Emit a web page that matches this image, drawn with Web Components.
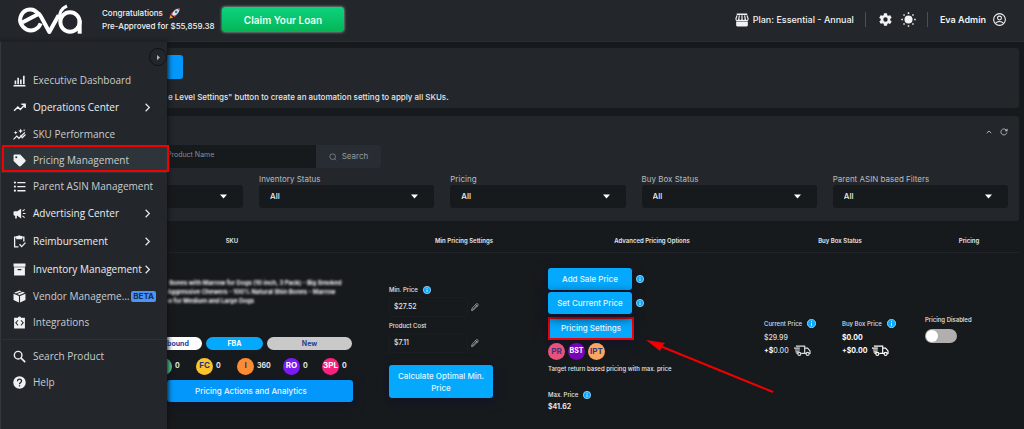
<!DOCTYPE html>
<html lang="en">
<head>
<meta charset="utf-8">
<title>Eva - Pricing Management</title>
<style>
html { background: #171a1d; }
body { margin: 0; min-height: 100vh; display: flex; font-family: Inter, "Open Sans", sans-serif; font-size: 10px; color: #e4e6e8; background: #171a1d; }
</style>
</head>
<body>
<eva-app></eva-app>
<script>
const define = (name, html, setup) => customElements.define(name, class extends HTMLElement {
  constructor() {
    super();
    const t = document.createElement('template');
    t.innerHTML = '<style>*{box-sizing:border-box}button,input,select{font:inherit;color:inherit;margin:0}</style>' + html;
    this.attachShadow({ mode: 'open' }).appendChild(t.content.cloneNode(true));
  }
  connectedCallback() { if (setup) setup(this, this.shadowRoot); }
});

const S = 'fill="none" stroke="currentColor" stroke-width="2" stroke-linecap="round" stroke-linejoin="round"';
const ICONS = {
  chart: '<path fill="currentColor" d="M1 20.500h22V23H1zM3 12h3v7H3zM8 7h3v12H8zM13 10h3v9h-3zM18.500 3h3v16h-3z"/>',
  trend: '<path fill="none" stroke="currentColor" stroke-width="2.600" d="M2 18l7-7 4.500 4.500L22 7M15.500 6H22.500v7"/>',
  spark: '<path fill="none" stroke="currentColor" stroke-width="2.200" d="M1 21l6-6 4 4L22 8M14 13l3 5 6-6"/><path fill="currentColor" d="M14 1l1.300 3.200L18.500 5.500l-3.200 1.300L14 10l-1.300-3.200L9.500 5.500l3.200-1.300zM5 5l1 2.500L8.500 8.500 6 9.500 5 12 4 9.500 1.500 8.500 4 7.500zM20.500 2l.6 1.400 1.400.6-1.400.6-.6 1.400-.6-1.400-1.400-.6 1.400-.6z"/>',
  tag: '<path fill="currentColor" fill-rule="evenodd" d="M1 3.500C1 2 2 1 3.500 1h8.700c.8 0 1.500.3 2.100.9l8.300 8.500c1.100 1.100 1.100 2.800 0 3.900l-7.900 7.900c-1.100 1.100-2.800 1.100-3.900 0L1.900 14C1.300 13.500 1 12.800 1 12zM6 4.200a1.900 1.900 0 1 0 0 3.800 1.900 1.900 0 0 0 0-3.800z"/>',
  list: '<path fill="currentColor" d="M8 3.500h15V6H8zM8 11h15v2.500H8zM8 18.500h15V21H8z"/><circle cx="3.500" cy="4.800" r="2" fill="currentColor"/><circle cx="3.500" cy="12.200" r="2" fill="currentColor"/><circle cx="3.500" cy="19.700" r="2" fill="currentColor"/>',
  horn: '<path fill="currentColor" d="M1 9.500C1 8.500 2 8 3 8h5l7-5v18l-7-5H7v5H4v-5H3c-1 0-2-.5-2-1.500z"/><path fill="none" stroke="currentColor" stroke-width="2" d="M18.500 12H23M17.500 7.500l4-3M17.500 16.500l4 3"/>',
  clip: '<path fill="none" stroke="currentColor" stroke-width="2.400" d="M10 22H3V4h17v8"/><path fill="currentColor" d="M6 2h3a3 3 0 0 1 5 0h3v6H6z"/><path fill="none" stroke="currentColor" stroke-width="2.400" d="M12 17l4 4.500L23 14"/>',
  box: '<path fill="currentColor" fill-rule="evenodd" d="M1 1h22v6H1zM2 8h20v15H2zM8.500 11v2.500h7V11z"/>',
  cube: '<path fill="currentColor" d="M12 1l4 1.500-10.500 4L2 5zM18 3.200L22 5 12 9 7.700 7.300zM1 7l10 4v12L1 18.500zM23 7l-10 4v12l10-4.500z"/>',
  code: '<path fill="currentColor" fill-rule="evenodd" d="M2 3h7a3.200 3.200 0 0 1 6 0h7v20H2zM10 8.500L8.700 7.200 3.900 12.500l4.800 5.300L10 16.500l-3.500-4zM14 8.500l3.500 4-3.500 4 1.300 1.300 4.800-5.300-4.800-5.300z"/>',
  search: '<circle cx="9.500" cy="9.500" r="7" fill="none" stroke="currentColor" stroke-width="2.600"/><path fill="none" stroke="currentColor" stroke-width="3" d="M14.500 14.500L22.500 22.500"/>',
  lens: '<circle cx="11" cy="11" r="8.500" fill="none" stroke="currentColor" stroke-width="2"/><path fill="none" stroke="currentColor" stroke-width="2" d="M16.500 16.500L21 22"/>',
  help: '<circle cx="12" cy="12" r="11.500" fill="currentColor"/><path fill="none" stroke="#23272b" stroke-width="2.400" d="M8.300 9.500c0-5.200 7.500-4.600 7.500-.3 0 2.600-3.800 3-3.800 6M12 17v2.600"/>',
  chevron: '<path fill="none" stroke="currentColor" stroke-width="3" d="M7 2l10 10L7 22"/>',
  play: '<path fill="currentColor" d="M7 3l10 9-10 9z"/>',
  store: '<path fill="currentColor" d="M3 1h18v2.500H3zM2 14.500h20V21c0 1-.8 2-2 2H4c-1.200 0-2-1-2-2z"/><path fill="none" stroke="currentColor" stroke-width="2" d="M3.500 4L1.500 10c0 4 5 4 5 0l1-6M6.500 10c0 4 5.500 4 5.500 0V4M12 10c0 4 5.500 4 5.500 0l-1-6M17.500 10c0 4 5 4 5 0l-2-6"/>',
  gear: '<path fill="currentColor" d="M19.400 13c0-.3.100-.6.100-1s0-.7-.1-1l2.100-1.600c.2-.2.200-.4.100-.6l-2-3.500c-.1-.2-.4-.3-.6-.2l-2.500 1c-.5-.4-1.100-.7-1.700-1l-.4-2.600c0-.2-.2-.4-.5-.4h-4c-.2 0-.4.200-.5.400l-.4 2.600c-.6.300-1.200.6-1.700 1l-2.500-1c-.2-.1-.5 0-.6.200l-2 3.500c-.1.200-.1.500.1.600L4.500 11c0 .3-.1.700-.1 1s0 .7.1 1l-2.100 1.600c-.2.200-.2.400-.1.600l2 3.500c.1.200.4.300.6.200l2.500-1c.5.400 1.100.7 1.700 1l.4 2.600c0 .3.200.5.500.5h4c.2 0 .4-.2.500-.4l.4-2.600c.6-.3 1.200-.6 1.700-1l2.500 1c.2.100.5 0 .6-.2l2-3.500c.1-.2.100-.5-.1-.6zM12 15.500a3.500 3.500 0 1 1 0-7 3.500 3.500 0 0 1 0 7z"/>',
  sun: '<circle cx="12" cy="12" r="6.400" fill="currentColor"/><path stroke="currentColor" stroke-width="2.400" d="M12 .5v2.500M12 21v2.500M.5 12h2.500M21 12h2.500M4 4l1.700 1.700M18.300 18.300l1.700 1.700M4 20l1.700-1.700M18.300 5.700L20 4"/>',
  user: '<circle cx="12" cy="12" r="10.800" fill="none" stroke="currentColor" stroke-width="2"/><circle cx="12" cy="9.300" r="3.600" fill="none" stroke="currentColor" stroke-width="2"/><path fill="none" stroke="currentColor" stroke-width="2" d="M4.500 19c3.500-4.500 11.500-4.500 15 0"/>',
  up: '<path fill="none" stroke="currentColor" stroke-width="3.500" d="M3 16.500L12 8l9 8.500"/>',
  refresh: '<path fill="none" stroke="currentColor" stroke-width="2.400" d="M20.500 13.500A9 9 0 1 1 18 5.500l2 2"/><path fill="currentColor" d="M22.500 1.500v8.500H14z"/>',
  caret: '<path fill="currentColor" d="M0 5h24L12 19z"/>',
  pencil: `<path ${S} d="M2 22l1.500-7L16.500 2.300c2.500-1.800 6 1.500 4.500 4.500L8.500 20zM14 5l5 5M6 19L17 8"/>`,
  info: '<circle cx="12" cy="12" r="11" fill="#0aa9fb" stroke="#bfe6fb" stroke-width="2"/><path stroke="#eaf8ff" stroke-width="2.600" d="M12 10.500V18M12 5.500v2.800"/>',
  rocket: '<path fill="#f9a11b" d="M1 23l2-8 6 6z"/><path fill="#e3342f" d="M3 13l5-5 3 3-5 6zM11 20l5-3v-5l-6 4z"/><path fill="#dfe6ee" d="M7 15C8 7 14 1 23 1c0 9-6 15-14 16z"/><path fill="#e3342f" d="M18 1.500C20 1 23 1 23 1s0 3-.5 5z"/><circle cx="15.500" cy="8.500" r="3" fill="#2f7fc6"/>',
  truck: '<path fill="none" stroke="currentColor" stroke-width="2.400" d="M4 2h18v15h-7M22 6h6l5 6v5h-2M8 17H5M25 17h-3M0 6h12M2 10h10M3 14h8"/><circle cx="11" cy="18" r="3" fill="none" stroke="currentColor" stroke-width="2.400"/><circle cx="28" cy="18" r="3" fill="none" stroke="currentColor" stroke-width="2.400"/>'
};
define('ui-icon', '<style>:host{display:inline-block;flex:none;width:var(--w,14px);height:var(--h,var(--w,14px))}svg{display:block;width:100%;height:100%}</style>', (el, root) => {
  const name = el.getAttribute('name');
  const box = name === 'truck' ? '0 0 35 22' : '0 0 24 24';
  root.innerHTML += `<svg viewBox="${box}" aria-hidden="true">${ICONS[name]}</svg>`;
});

define('eva-logo', `<style>:host{display:block;flex:none;width:66px;height:32px}svg{display:block}</style>
<svg width="66" height="32" viewBox="0 0 198 96" role="img" aria-label="Eva" fill="none" stroke="#fff" stroke-width="12" stroke-linejoin="round">
<path d="M17 55L63 31C53 11 24 12 13 33C0 60 28 88 55 76C63 72 68 66 71 58"/>
<path d="M60 27C66 28 69 32 72 38L97 84L125 34"/>
<circle cx="159" cy="54" r="29"/>
<path d="M188 50V89"/>
<path d="M128 44C126 24 136 12 150 6" stroke-width="9"/></svg>`);

define('header-bar', `<style>
:host{display:flex;align-items:center;height:42px;padding:0 18px 2px 17px;background:#23272b;border-bottom:1px solid #2a2e32;color:#f1f2f3}
.offer{display:grid;gap:1px;margin-left:19px;font-size:8px;line-height:12px;font-weight:500;white-space:nowrap;width:120px}
.offer div{display:flex;align-items:center;gap:4px}
.offer ui-icon{margin-left:2px}
.loan{width:122px;height:25px;border:0;border-radius:3px;background:linear-gradient(#0bd47e,#06b457);box-shadow:0 0 3px #a9c8b6;color:#e8fff2;font-size:10px;font-weight:600;padding:0}
.right{margin-left:auto;display:flex;align-items:center;font-size:9px;line-height:14px;white-space:nowrap}
.plan{display:flex;align-items:center;gap:4px;font-weight:500}
i{width:1px;height:15px;background:#4b5054;margin:0 12px 0 11px}
.icons{display:flex;gap:8px}
.who{display:flex;align-items:center;gap:7px;font-weight:600}
button.ic{background:none;border:0;padding:0;display:flex}
</style>
<eva-logo></eva-logo>
<div class="offer"><div><span>Congratulations</span><ui-icon name="rocket" style="--w:11px"></ui-icon></div><span>Pre-Approved for $55,859.38</span></div>
<button class="loan">Claim Your Loan</button>
<div class="right"><span class="plan"><ui-icon name="store" style="--w:14px"></ui-icon>Plan: Essential - Annual</span><i></i>
<span class="icons"><button class="ic" aria-label="Settings"><ui-icon name="gear" style="--w:15px"></ui-icon></button><button class="ic" aria-label="Theme"><ui-icon name="sun" style="--w:15px"></ui-icon></button></span><i></i>
<span class="who">Eva Admin<ui-icon name="user" style="--w:13px"></ui-icon></span></div>`);

define('nav-item', `<style>
:host{display:block;position:relative}
a{display:flex;align-items:center;height:26px;padding:0 15px 0 13px;color:#c9cccf;text-decoration:none;font:10px/14px "Open Sans",sans-serif;white-space:nowrap}
ui-icon{color:#f0f1f2}
.t{margin-left:7px;flex:1}
:host([group]) a{height:28px;color:#eceeef;font-weight:500}
:host([beta]) a{padding-right:11px}
:host([active]) a{background:#2d343a}
:host([active])::after{content:"";position:absolute;inset:-2px -2px 1px 2px;border:2px solid #f30000}
b{background:#4c93f5;color:#152f57;border-radius:2px;font:700 8px/11px Inter,sans-serif;padding:0 2px}
</style><a href="#"><ui-icon></ui-icon><span class="t"><slot></slot></span></a>`, (el, root) => {
  const a = root.querySelector('a');
  root.querySelector('ui-icon').outerHTML = `<ui-icon name="${el.getAttribute('icon')}" style="--w:13px"></ui-icon>`;
  if (el.hasAttribute('group')) a.insertAdjacentHTML('beforeend', '<ui-icon name="chevron" style="--w:9px"></ui-icon>');
  if (el.hasAttribute('beta')) a.insertAdjacentHTML('beforeend', '<b>BETA</b>');
});

define('side-nav', `<style>
:host{display:block;position:relative;z-index:2;background:#23272b;border-left:1px solid #34383c;box-shadow:1px 0 5px #0e1113}
nav{padding-top:25px;margin-left:-1px}
hr{border:0;border-top:1px solid #2d3135;margin:4px 0 3px}
.fold{position:absolute;right:0;top:6px;width:18px;height:18px;border-radius:50%;border:1px solid #101316;background:#23272b;color:#b4b7ba;display:grid;place-items:center;padding:0}
</style><nav aria-label="Main">
<nav-item icon="chart">Executive Dashboard</nav-item>
<nav-item icon="trend" group>Operations Center</nav-item>
<nav-item icon="spark">SKU Performance</nav-item>
<nav-item icon="tag" active>Pricing Management</nav-item>
<nav-item icon="list">Parent ASIN Management</nav-item>
<nav-item icon="horn" group>Advertising Center</nav-item>
<nav-item icon="clip" group>Reimbursement</nav-item>
<nav-item icon="box" group>Inventory Management</nav-item>
<nav-item icon="cube" beta>Vendor Manageme…</nav-item>
<nav-item icon="code">Integrations</nav-item>
<hr>
<nav-item icon="search">Search Product</nav-item>
<nav-item icon="help">Help</nav-item>
</nav><button class="fold" aria-label="Collapse menu"><ui-icon name="play" style="--w:7px"></ui-icon></button>`);

define('filter-select', `<style>
:host{display:block;min-width:0}
label{display:block;height:12px;font-size:8px;line-height:12px;color:#b9bcbf;white-space:nowrap}
.f{display:grid;align-items:center}
select{grid-area:1/1;width:100%;height:23px;appearance:none;border:0;border-radius:3px;background:#171a1d;color:#eceeef;font-size:8px;font-weight:500;padding:0 11px}
ui-icon{grid-area:1/1;justify-self:end;margin-right:16px;color:#fff;pointer-events:none}
</style><label for="s"></label><div class="f"><select id="s"><option></option></select><ui-icon name="caret" style="--w:7px;--h:7px"></ui-icon></div>`, (el, root) => {
  root.querySelector('label').textContent = el.getAttribute('label') || '';
  root.querySelector('option').textContent = el.getAttribute('value') || '';
  if (!el.getAttribute('label')) root.querySelector('select').setAttribute('aria-label', 'Filter');
});

define('intro-panel', `<style>
:host{display:block;height:60px;padding-top:7px;background:#23272b;border-radius:0 3px 3px 0}
button{display:block;width:16px;height:24px;border:0;border-radius:0 3px 3px 0;background:#0396fb}
p{margin:11px 0 0 1px;font-size:8px;line-height:14px;color:#e4e6e8;white-space:nowrap;font-weight:500}
</style><button aria-label="Store level settings"></button><p>e Level Settings" button to create an automation setting to apply all SKUs.</p>`);

define('filter-panel', `<style>
:host{display:block;margin-top:8px;padding:10px 11px 13px 0;background:#23272b;border-radius:0 3px 3px 0}
.tools{display:flex;justify-content:flex-end;align-items:center;gap:8px;height:12px;color:#c8cbcd}
.tools button{background:none;border:0;padding:0;display:flex}
form{display:flex;margin-top:7px;height:23px}
input{width:149px;border:0;background:#171a1d;font-size:7px;padding:0 0 3px}
input::placeholder{color:#888c8f;opacity:1}
.go{width:65px;border:0;border-radius:0 3px 3px 0;background:#272d32;color:#979b9f;display:flex;align-items:center;justify-content:center;gap:5px;font-size:8px;padding:0}
.row{display:grid;grid-template-columns:76px repeat(4,minmax(0,1fr));gap:16px;margin-top:5px}
</style>
<div class="tools"><button aria-label="Collapse"><ui-icon name="up" style="--w:6px"></ui-icon></button><button aria-label="Refresh"><ui-icon name="refresh" style="--w:8px"></ui-icon></button></div>
<form><input type="text" placeholder="Product Name" aria-label="Product Name"><button type="button" class="go"><ui-icon name="lens" style="--w:8px"></ui-icon>Search</button></form>
<div class="row"><filter-select></filter-select><filter-select label="Inventory Status" value="All"></filter-select><filter-select label="Pricing" value="All"></filter-select><filter-select label="Buy Box Status" value="All"></filter-select><filter-select label="Parent ASIN based Filters" value="All"></filter-select></div>`);

define('blue-button', `<style>
:host{display:block}
button{display:block;width:100%;min-height:22px;border:0;border-radius:3px;background:var(--bg,#04a9fd);color:#e2f5ff;font-size:8px;line-height:12px;font-weight:500;padding:0 4px;box-shadow:0 3px 12px #11122a}
:host([marked]) button{border-radius:0;border:2px solid #ee0008;height:23px}
</style><button><slot></slot></button>`);

define('round-badge', `<style>
:host{display:inline-flex;align-items:center;gap:3px;font-size:7px;font-weight:700;color:#e4e6e8}
span{display:grid;place-items:center;width:17px;height:17px;border-radius:50%;background:var(--c);color:var(--t,#23357f);font-size:var(--fs,8px)}
</style><span></span><slot></slot>`, (el, root) => { root.querySelector('span').textContent = el.getAttribute('code') || ''; });

define('sku-cell', `<style>
:host{display:block;overflow:hidden;padding:25px 0 20px}
p{margin:0;height:27px;font-size:6px;line-height:9px;white-space:nowrap;font-weight:700;color:#f4f5f6;filter:blur(1px)}
p span{display:block}
p span:first-child{padding-left:2px}
.pills{display:flex;gap:4px;margin-top:32px;font-size:7px;font-weight:700;line-height:13px;text-align:center}
.pills span{border-radius:7px}
.in{width:35px;background:#fff;color:#23409c;border-radius:0 7px 7px 0 !important;text-align:left}
.fba{width:57px;background:#04a9fd;color:#fff}
.new{width:85px;background:#c9c9ca;color:#2b3f8c}
.cs{display:grid;grid-template-columns:41px 41px 46px 39px 40px;margin:8px 0 5px -12px}
blue-button{width:186px;--bg:#0396fb}
blue-button span{margin-right:18px}
</style>
<p><span>Bones with Marrow for Dogs (10 inch, 3 Pack) - Big Smoked</span><span>Aggressive Chewers - 100% Natural Shin Bones - Marrow</span><span>w for Medium and Large Dogs</span></p>
<div class="pills"><span class="in">bound</span><span class="fba">FBA</span><span class="new">New</span></div>
<div class="cs"><round-badge style="--c:#55cf95">0</round-badge><round-badge code="FC" style="--c:#fbc42a">0</round-badge><round-badge code="I" style="--c:#fb8c34">360</round-badge><round-badge code="RO" style="--c:#7a1bf5;--t:#fff">0</round-badge><round-badge code="3PL" style="--c:#f9207e;--t:#fff">0</round-badge></div>
<blue-button><span>Pricing Actions and Analytics</span></blue-button>`);

define('price-edit', `<style>
:host{display:block;width:90px}
.l{display:flex;align-items:center;gap:5px;height:12px;font-size:6px;line-height:12px;font-weight:500}
.r{display:flex;align-items:center;justify-content:space-between;margin-top:1px}
input{width:79px;height:20px;border:1px solid #1b1e21;border-radius:2px;background:transparent;font-size:7px;font-weight:500;padding:0 4px}
button{background:none;border:0;padding:0;display:flex;color:#c5c8ca}
</style><div class="l"><label for="v"></label></div><div class="r"><input id="v" type="text"><button aria-label="Edit"><ui-icon name="pencil" style="--w:8px"></ui-icon></button></div>`, (el, root) => {
  root.querySelector('label').textContent = el.getAttribute('label');
  root.querySelector('input').value = el.getAttribute('value');
  if (el.hasAttribute('info')) root.querySelector('.l').insertAdjacentHTML('beforeend', '<ui-icon name="info" style="--w:8px"></ui-icon>');
});

define('min-cell', `<style>
:host{display:grid;gap:3px;padding:31px 0 0 4px}
blue-button{width:104px;margin-top:9px}
blue-button span{display:block;padding:5px 0 4px}
</style><price-edit label="Min. Price" value="$27.52" info></price-edit><price-edit label="Product Cost" value="$7.11"></price-edit><blue-button><span>Calculate Optimal Min. Price</span></blue-button>`);

define('advanced-cell', `<style>
:host{display:block;position:relative;padding:15px 0 0 5px;font-size:6px;line-height:12px;font-weight:500}
.b{display:grid;grid-template-columns:84px 8px;column-gap:4px;row-gap:2px;align-items:center}
.m{width:86px;margin-top:3px}
.c{display:flex;gap:3px;margin:3px 0}
.x{display:flex;align-items:center;gap:5px;margin-top:14px}
.v{font-weight:700;font-size:7px}
p{margin:0;white-space:nowrap}
svg{position:absolute;left:103px;top:87px;pointer-events:none}
</style>
<div class="b"><blue-button>Add Sale Price</blue-button><ui-icon name="info" style="--w:8px"></ui-icon><blue-button>Set Current Price</blue-button><ui-icon name="info" style="--w:8px"></ui-icon></div>
<blue-button class="m" marked>Pricing Settings</blue-button>
<div class="c"><round-badge code="PR" style="--c:#e8527c;--t:#3d3580"></round-badge><round-badge code="BST" style="--c:#7a04b8;--t:#fff;--fs:7px"></round-badge><round-badge code="IPT" style="--c:#fba561;--t:#33397c"></round-badge></div>
<p>Target return based pricing with max. price</p>
<p class="x">Max. Price<ui-icon name="info" style="--w:8px"></ui-icon></p><p class="v">$41.62</p>
<svg width="130" height="54" viewBox="0 0 130 54" aria-hidden="true"><path d="M14 6L127 52" stroke="#f00000" stroke-width="2"/><path d="M0 0L19 3L16 6L14 11Z" fill="#f00000"/></svg>`);

define('box-price', `<style>
:host{display:block;font-size:6px;line-height:13px;color:#dcdfe1;white-space:nowrap;font-weight:500}
div{display:flex;align-items:center}
.l{gap:5px;height:14px}
.s{gap:5px}
.p{font-size:7px}
:host([strong]) .p{font-weight:700;color:#fff}
b{font-weight:700;color:#fff}
</style><div class="l"><slot></slot><ui-icon name="info" style="--w:9px"></ui-icon></div><div class="p pr"></div><div class="p s"><span><b>+$</b>0.00</span><ui-icon name="truck" style="--w:17px;--h:13px"></ui-icon></div>`, (el, root) => {
  root.querySelector('.pr').textContent = el.getAttribute('price');
});
define('buybox-cell', `<style>:host{display:grid;grid-template-columns:78px auto;padding:64px 0 0 3px}</style><box-price price="$29.99">Current Price</box-price><box-price strong price="$0.00">Buy Box Price</box-price>`);

define('pricing-cell', `<style>
:host{display:block;padding:61px 0 0 6px;font-size:6px;line-height:12px}
label{display:grid;gap:3px;white-space:nowrap;font-weight:500}
input{appearance:none;width:32px;height:14px;border-radius:7px;background:#b2aeae;display:flex;align-items:center;padding:0 1px}
input::before{content:"";width:12px;height:12px;border-radius:50%;background:#fff}
</style><label>Pricing Disabled<input type="checkbox" role="switch"></label>`);

define('sku-table', `<style>
:host{display:block}
table{width:100%;border-collapse:collapse;table-layout:fixed}
th{height:31px;padding:10px 0 0;font-size:6px;line-height:10px;font-weight:600;color:#e4e6e8;text-align:center;white-space:nowrap}
th:first-child{padding-right:88px}
td{padding:0;vertical-align:top;border-top:1px solid #202428}
</style><table><colgroup><col style="width:218px"><col style="width:158px"><col style="width:218px"><col style="width:158px"><col style="width:100px"></colgroup>
<thead><tr><th>SKU</th><th>Min Pricing Settings</th><th>Advanced Pricing Options</th><th>Buy Box Status</th><th>Pricing</th></tr></thead>
<tbody><tr><td><sku-cell></sku-cell></td><td><min-cell></min-cell></td><td><advanced-cell></advanced-cell></td><td><buybox-cell></buybox-cell></td><td><pricing-cell></pricing-cell></td></tr></tbody></table>`);

define('eva-app', `<style>
:host{flex:1;min-width:0;display:grid;grid-template:auto 1fr / 167px minmax(0,1fr);line-height:1.2}
header-bar{grid-column:1/-1}
main{padding:6px 5px 0 0}
</style><header-bar></header-bar><side-nav></side-nav><main><intro-panel></intro-panel><filter-panel></filter-panel><sku-table></sku-table></main>`);
</script>
</body>
</html>
